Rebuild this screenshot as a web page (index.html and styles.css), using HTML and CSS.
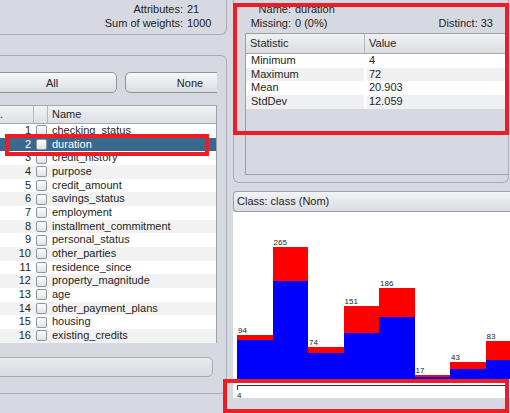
FILE: index.html
```html
<!DOCTYPE html>
<html>
<head>
<meta charset="utf-8">
<link rel="stylesheet" href="styles.css">
</head>
<body>
<div class="app">
  <div class="left">
    <div class="summary">
      <span class="k">Attributes:</span><span class="v">21</span>
      <span class="k">Sum of weights:</span><span class="v">1000</span>
    </div>
    <div class="attrs">
      <div class="attrs-inner">
        <div class="btns"><button class="btn">All</button><button class="btn">None</button></div>
        <div class="table">
          <div class="thead">
            <div class="h-no"><span>No.</span></div>
            <div class="h-cb"></div>
            <div class="h-name">Name</div>
          </div>
          <div class="row"><div class="c-no">1</div><div class="c-cb"><span class="cb"></span></div><div class="c-name">checking_status</div></div>
          <div class="row sel"><div class="c-no">2</div><div class="c-cb"><span class="cb"></span></div><div class="c-name">duration</div></div>
          <div class="row"><div class="c-no">3</div><div class="c-cb"><span class="cb"></span></div><div class="c-name">credit_history</div></div>
          <div class="row"><div class="c-no">4</div><div class="c-cb"><span class="cb"></span></div><div class="c-name">purpose</div></div>
          <div class="row"><div class="c-no">5</div><div class="c-cb"><span class="cb"></span></div><div class="c-name">credit_amount</div></div>
          <div class="row"><div class="c-no">6</div><div class="c-cb"><span class="cb"></span></div><div class="c-name">savings_status</div></div>
          <div class="row"><div class="c-no">7</div><div class="c-cb"><span class="cb"></span></div><div class="c-name">employment</div></div>
          <div class="row"><div class="c-no">8</div><div class="c-cb"><span class="cb"></span></div><div class="c-name">installment_commitment</div></div>
          <div class="row"><div class="c-no">9</div><div class="c-cb"><span class="cb"></span></div><div class="c-name">personal_status</div></div>
          <div class="row"><div class="c-no">10</div><div class="c-cb"><span class="cb"></span></div><div class="c-name">other_parties</div></div>
          <div class="row"><div class="c-no">11</div><div class="c-cb"><span class="cb"></span></div><div class="c-name">residence_since</div></div>
          <div class="row"><div class="c-no">12</div><div class="c-cb"><span class="cb"></span></div><div class="c-name">property_magnitude</div></div>
          <div class="row"><div class="c-no">13</div><div class="c-cb"><span class="cb"></span></div><div class="c-name">age</div></div>
          <div class="row"><div class="c-no">14</div><div class="c-cb"><span class="cb"></span></div><div class="c-name">other_payment_plans</div></div>
          <div class="row"><div class="c-no">15</div><div class="c-cb"><span class="cb"></span></div><div class="c-name">housing</div></div>
          <div class="row"><div class="c-no">16</div><div class="c-cb"><span class="cb"></span></div><div class="c-name">existing_credits</div></div>
        </div>
        <div class="remove-bar"></div>
      </div>
    </div>
  </div>
  <div class="splitter"></div>
  <div class="right">
    <div class="info">
      <div class="info-line"><span class="lbl">Name:</span><span class="val">duration</span></div>
      <div class="info-line"><span class="lbl">Missing:</span><span class="val">0 (0%)</span><span class="distinct">Distinct: 33</span></div>
      <div class="stats">
        <div class="s-head"><div class="s-h1">Statistic</div><div class="s-h2">Value</div></div>
        <div class="s-row"><div>Minimum</div><div>4</div></div>
        <div class="s-row"><div>Maximum</div><div>72</div></div>
        <div class="s-row"><div>Mean</div><div>20.903</div></div>
        <div class="s-row"><div>StdDev</div><div>12.059</div></div>
      </div>
    </div>
    <div class="combo">Class: class (Nom)</div>
    <div class="chart">
      <div class="bar"><span class="lab">94</span><div class="seg red" style="height:5px"></div><div class="seg blue" style="height:39px"></div></div>
      <div class="bar"><span class="lab">265</span><div class="seg red" style="height:34px"></div><div class="seg blue" style="height:98px"></div></div>
      <div class="bar"><span class="lab">74</span><div class="seg red" style="height:6px"></div><div class="seg blue" style="height:26px"></div></div>
      <div class="bar"><span class="lab">151</span><div class="seg red" style="height:27px"></div><div class="seg blue" style="height:46px"></div></div>
      <div class="bar"><span class="lab">186</span><div class="seg red" style="height:29px"></div><div class="seg blue" style="height:62px"></div></div>
      <div class="bar"><span class="lab">17</span><div class="seg red" style="height:2px"></div><div class="seg blue" style="height:2px"></div></div>
      <div class="bar"><span class="lab">43</span><div class="seg red" style="height:7px"></div><div class="seg blue" style="height:10px"></div></div>
      <div class="bar"><span class="lab">83</span><div class="seg red" style="height:19px"></div><div class="seg blue" style="height:19px"></div></div>
    </div>
    <div class="axis">
      <div class="axis-line"></div>
      <div class="axis-label">4</div>
    </div>
  </div>
</div>
<div class="mark mark-row"></div>
<div class="mark mark-stats"></div>
<div class="mark mark-axis"></div>
</body>
</html>
```

FILE: styles.css
```css
* { box-sizing: border-box; }
html, body { margin: 0; padding: 0; }
body {
  width: 510px;
  height: 413px;
  overflow: hidden;
  position: relative;
  background: #d6d9df;
  font-family: "Liberation Sans", Arial, sans-serif;
  font-size: 11px;
  color: #1e1e1e;
}
.app { display: flex; width: 510px; height: 413px; }

/* left column */
.left { width: 227px; flex: none; display: flex; flex-direction: column; }
.summary {
  height: 35px;
  border-right: 1px solid #a9aeb6;
  border-bottom: 1px solid #a9aeb6;
  border-bottom-right-radius: 6px;
  padding-top: 2px;
  display: grid;
  grid-template-columns: 183px auto;
  column-gap: 4px;
  align-content: start;
  line-height: 14px;
}
.summary .k { text-align: right; }

.attrs {
  margin-top: 20px;
  height: 339px;
  border-top: 1px solid #a9aeb6;
  border-right: 1px solid #a9aeb6;
  border-bottom: 1px solid #a9aeb6;
  border-top-right-radius: 6px;
  border-bottom-right-radius: 6px;
}
.attrs-inner { width: 217px; overflow: hidden; padding-top: 16px; }
.btns { display: flex; gap: 8px; margin-left: -13px; height: 21px; }
.btn {
  flex: none;
  width: 130px;
  height: 21px;
  padding: 0;
  font: inherit;
  color: #222;
  border: 1px solid #8e949d;
  border-radius: 5px;
  background: linear-gradient(#f7f8fa, #d9dce1);
}

.table { margin-top: 12px; background: #fff; border-right: 1px solid #9ba1a9; }
.thead {
  display: flex;
  height: 19px;
  line-height: 17px;
  background: linear-gradient(#f1f2f4, #dcdfe3);
  border-top: 1px solid #a3a8b0;
  border-bottom: 1px solid #a3a8b0;
}
.h-no { width: 34px; overflow: hidden; white-space: nowrap; border-right: 1px solid #b3b7be; }
.h-no span { display: inline-block; margin-left: -14px; }
.h-cb { width: 14px; border-right: 1px solid #b3b7be; }
.h-name { padding-left: 4px; }

.row { display: flex; height: 13.67px; line-height: 13.67px; white-space: nowrap; }
.row:nth-child(odd) { background: #f2f2f2; }
.row.sel { background: #3a698e; color: #fff; }
.c-no { width: 34px; text-align: right; padding-right: 3px; }
.c-cb { width: 14px; display: flex; align-items: center; padding-left: 2px; }
.cb {
  width: 11px;
  height: 11px;
  border: 1px solid #8e949c;
  border-radius: 2px;
  background: linear-gradient(#fdfdfd, #dfe2e6);
}
.c-name { padding-left: 4px; }

.remove-bar {
  margin-top: 14px;
  margin-left: -10px;
  width: 223px;
  height: 20px;
  border: 1px solid #a6abb3;
  border-radius: 5px;
  background: linear-gradient(#e8eaed, #d9dce1);
}

.splitter { width: 6px; flex: none; }

/* right column */
.right { width: 277px; flex: none; display: flex; flex-direction: column; overflow: hidden; }
.info {
  height: 183px;
  margin-right: 1px;
  border-left: 1px solid #a9aeb6;
  border-right: 1px solid #a9aeb6;
  border-bottom: 1px solid #a9aeb6;
  border-bottom-left-radius: 6px;
  border-bottom-right-radius: 6px;
  padding-top: 2px;
  overflow: hidden;
}
.info-line { display: flex; line-height: 14px; white-space: nowrap; }
.lbl { width: 57px; text-align: right; }
.val { margin-left: 4px; }
.distinct { margin-left: auto; padding-right: 15px; }

.stats {
  margin-top: 3px;
  margin-left: 11px;
  width: 280px;
  height: 142px;
  border: 1px solid #9aa0a8;
}
.s-head {
  display: grid;
  grid-template-columns: 119px 1fr;
  height: 20px;
  line-height: 19px;
  background: linear-gradient(#eff0f3, #dcdfe3);
  border-bottom: 1px solid #a3a8b0;
}
.s-h1 { padding-left: 4px; border-right: 1px solid #b3b7be; }
.s-h2 { padding-left: 4px; }
.s-row {
  display: grid;
  grid-template-columns: 118px 1fr;
  column-gap: 3px;
  height: 13.67px;
  line-height: 13.67px;
  background: #fff;
}
.s-row > div:first-child { padding-left: 5px; }
.s-row > div:last-child { padding-left: 2px; }
.s-row:nth-child(odd) > div { background: #eff0f2; }

.combo {
  margin-top: 8px;
  height: 21px;
  line-height: 19px;
  padding-left: 3px;
  border: 1px solid #9aa0a8;
  border-right: none;
  border-radius: 4px 0 0 4px;
  background: linear-gradient(#f3f4f6, #d8dbe0);
  white-space: nowrap;
}

.chart {
  height: 167px;
  background: #fff;
  display: flex;
  align-items: flex-end;
  padding-left: 4px;
  overflow: hidden;
}
.bar { flex: none; width: 35.5px; display: flex; flex-direction: column; }
.lab { font-size: 8px; line-height: 9px; height: 9px; padding-left: 1px; color: #222; }
.seg { width: 100%; }
.red { background: #ff0000; }
.blue { background: #0000ff; }

.axis { height: 19px; background: #fff; padding-left: 4px; padding-top: 6px; }
.axis-line { width: 272px; height: 5px; border-top: 1px solid #333; border-left: 1px solid #333; }
.axis-label { font-size: 8px; line-height: 8px; margin-top: 2px; color: #222; }

/* annotation overlays */
.mark { position: absolute; border: 4px solid #ee1c24; }
.mark-row { left: 5px; top: 134px; width: 204px; height: 22px; }
.mark-stats { left: 233px; top: 3px; width: 276px; height: 132px; }
.mark-axis { left: 223px; top: 379px; width: 286px; height: 34px; }
```
